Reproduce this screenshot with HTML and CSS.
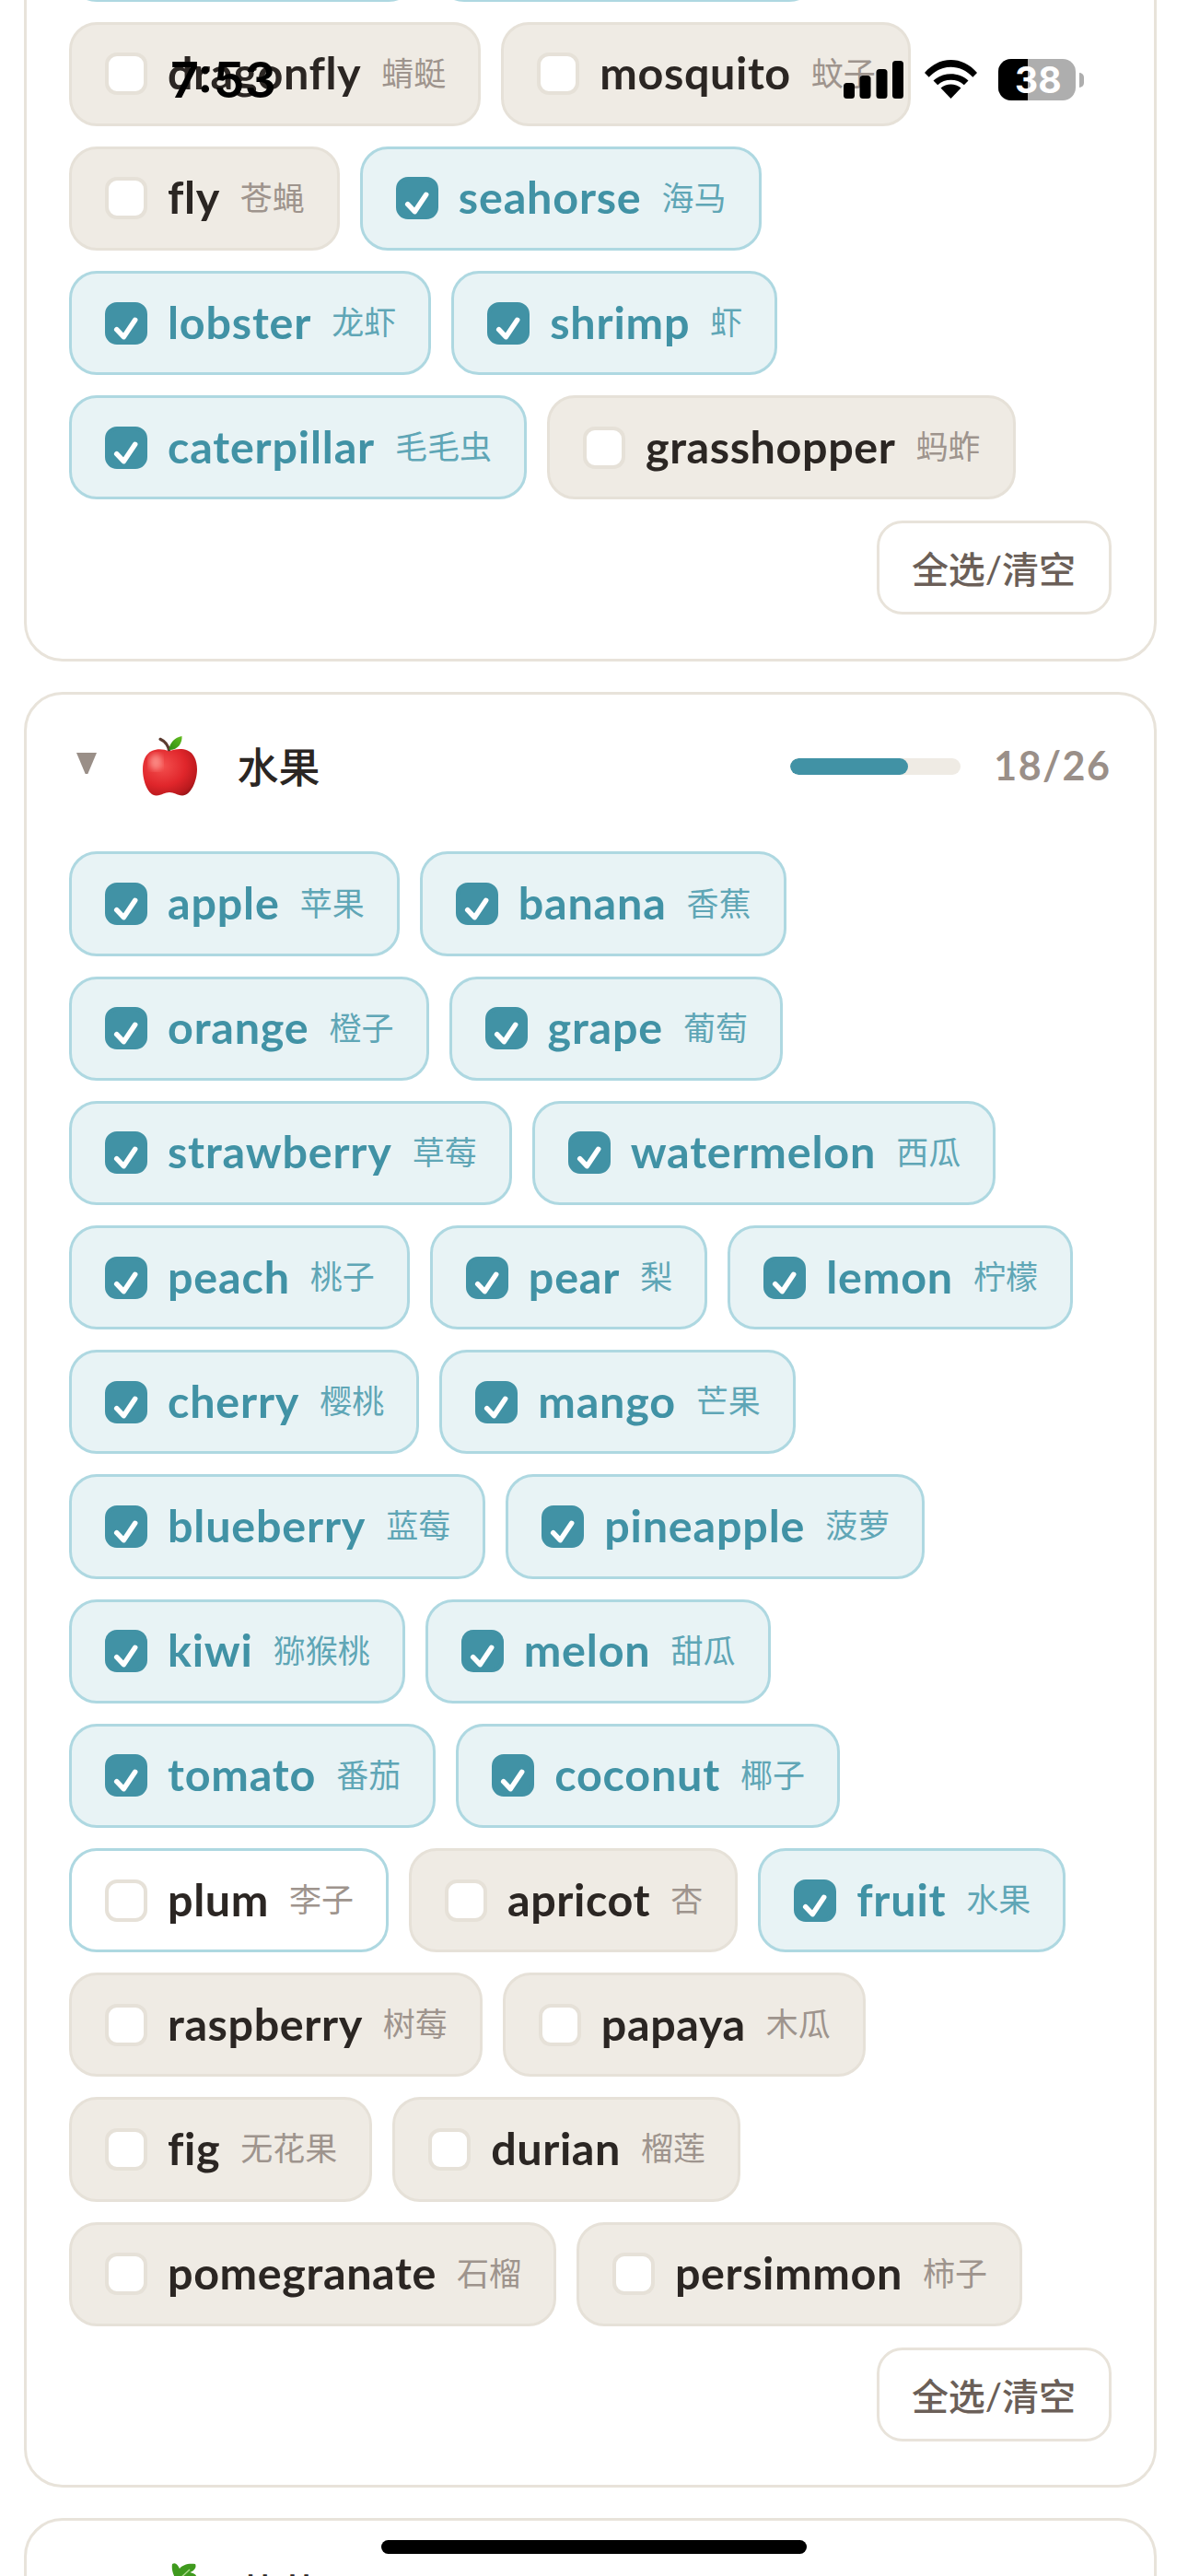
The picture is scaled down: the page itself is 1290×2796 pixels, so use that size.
FILE: index.html
```html
<!DOCTYPE html>
<html lang="zh">
<head>
    <meta charset="UTF-8">
    <title>词汇分类</title>
    <link rel="stylesheet" href="styles.css">
</head>
<body>

    <!-- hidden check glyph, reused by every ticked chip -->
    <svg class="defs" width="0" height="0">
        <symbol id="tick" viewBox="0 0 46 46">
            <path d="M12.7 29.7 20.3 37.7 32.7 19.3" fill="none" stroke="#fff" stroke-width="5.5" stroke-linecap="round" stroke-linejoin="round"/>
        </symbol>
    </svg>

    <main class="page">

        <!-- Insects (scrolled off the top) -->
        <section class="card card-cut">
            <div class="chips">
                <label class="chip on"><span class="box"><svg><use href="#tick"/></svg></span><span class="en">beetle</span><span class="cn">甲虫</span></label>
                <label class="chip on"><span class="box"><svg><use href="#tick"/></svg></span><span class="en">ladybug</span><span class="cn">瓢虫</span></label>
                <label class="chip"><span class="box"></span><span class="en">dragonfly</span><span class="cn">蜻蜓</span></label>
                <label class="chip"><span class="box"></span><span class="en">mosquito</span><span class="cn">蚊子</span></label>
                <label class="chip"><span class="box"></span><span class="en">fly</span><span class="cn">苍蝇</span></label>
                <label class="chip on"><span class="box"><svg><use href="#tick"/></svg></span><span class="en">seahorse</span><span class="cn">海马</span></label>
                <label class="chip on"><span class="box"><svg><use href="#tick"/></svg></span><span class="en">lobster</span><span class="cn">龙虾</span></label>
                <label class="chip on"><span class="box"><svg><use href="#tick"/></svg></span><span class="en">shrimp</span><span class="cn">虾</span></label>
                <label class="chip on"><span class="box"><svg><use href="#tick"/></svg></span><span class="en">caterpillar</span><span class="cn">毛毛虫</span></label>
                <label class="chip"><span class="box"></span><span class="en">grasshopper</span><span class="cn">蚂蚱</span></label>
            </div>
            <div class="actions"><button class="toggle-all">全选/清空</button></div>
        </section>

        <!-- Fruit -->
        <section class="card">
            <header class="card-head">
                <span class="arrow"></span>
                <svg class="emoji" viewBox="0 0 61 66">
                    <defs>
                        <radialGradient id="appleBody" cx="0.36" cy="0.36" r="0.78">
                            <stop offset="0" stop-color="#f4504f"/>
                            <stop offset="0.55" stop-color="#e0262b"/>
                            <stop offset="0.85" stop-color="#bb1a1e"/>
                            <stop offset="1" stop-color="#8f1416"/>
                        </radialGradient>
                        <linearGradient id="appleLeaf" x1="0" y1="1" x2="1" y2="0">
                            <stop offset="0" stop-color="#2f8d14"/>
                            <stop offset="1" stop-color="#63bd20"/>
                        </linearGradient>
                        <filter id="soft"><feGaussianBlur stdDeviation="3"/></filter>
                    </defs>
                    <path d="M30 18C29 12 25 6.500 20 4.300" fill="none" stroke="#5b3b30" stroke-width="3.200" stroke-linecap="round"/>
                    <path d="M29.500 16C30 8 36 2.500 43.500 1C44 8 40 16 29.500 16Z" fill="url(#appleLeaf)"/>
                    <path d="M29.500 17.500C24 15 17 14.500 11 17C4 20 1 28 1 37C1 50 7 66 16 65.500C22 65 25 62 30 62C35 62 38 65 44 65.500C53 65.500 60 50 60 37C60 27 56 19 49.500 16.500C43 14 35 15 29.500 17.500Z" fill="url(#appleBody)"/>
                    <ellipse cx="15" cy="29" rx="7" ry="9" fill="#ff9d96" opacity="0.75" filter="url(#soft)"/>
                </svg>
                <h2 class="card-title">水果</h2>
                <div class="progress"><div class="progress-fill"></div></div>
                <span class="count">18/26</span>
            </header>
            <div class="chips">
                <label class="chip on"><span class="box"><svg><use href="#tick"/></svg></span><span class="en">apple</span><span class="cn">苹果</span></label>
                <label class="chip on"><span class="box"><svg><use href="#tick"/></svg></span><span class="en">banana</span><span class="cn">香蕉</span></label>
                <label class="chip on"><span class="box"><svg><use href="#tick"/></svg></span><span class="en">orange</span><span class="cn">橙子</span></label>
                <label class="chip on"><span class="box"><svg><use href="#tick"/></svg></span><span class="en">grape</span><span class="cn">葡萄</span></label>
                <label class="chip on"><span class="box"><svg><use href="#tick"/></svg></span><span class="en">strawberry</span><span class="cn">草莓</span></label>
                <label class="chip on"><span class="box"><svg><use href="#tick"/></svg></span><span class="en">watermelon</span><span class="cn">西瓜</span></label>
                <label class="chip on"><span class="box"><svg><use href="#tick"/></svg></span><span class="en">peach</span><span class="cn">桃子</span></label>
                <label class="chip on"><span class="box"><svg><use href="#tick"/></svg></span><span class="en">pear</span><span class="cn">梨</span></label>
                <label class="chip on"><span class="box"><svg><use href="#tick"/></svg></span><span class="en">lemon</span><span class="cn">柠檬</span></label>
                <label class="chip on"><span class="box"><svg><use href="#tick"/></svg></span><span class="en">cherry</span><span class="cn">樱桃</span></label>
                <label class="chip on"><span class="box"><svg><use href="#tick"/></svg></span><span class="en">mango</span><span class="cn">芒果</span></label>
                <label class="chip on"><span class="box"><svg><use href="#tick"/></svg></span><span class="en">blueberry</span><span class="cn">蓝莓</span></label>
                <label class="chip on"><span class="box"><svg><use href="#tick"/></svg></span><span class="en">pineapple</span><span class="cn">菠萝</span></label>
                <label class="chip on"><span class="box"><svg><use href="#tick"/></svg></span><span class="en">kiwi</span><span class="cn">猕猴桃</span></label>
                <label class="chip on"><span class="box"><svg><use href="#tick"/></svg></span><span class="en">melon</span><span class="cn">甜瓜</span></label>
                <label class="chip on"><span class="box"><svg><use href="#tick"/></svg></span><span class="en">tomato</span><span class="cn">番茄</span></label>
                <label class="chip on"><span class="box"><svg><use href="#tick"/></svg></span><span class="en">coconut</span><span class="cn">椰子</span></label>
                <label class="chip hover"><span class="box"></span><span class="en">plum</span><span class="cn">李子</span></label>
                <label class="chip"><span class="box"></span><span class="en">apricot</span><span class="cn">杏</span></label>
                <label class="chip on"><span class="box"><svg><use href="#tick"/></svg></span><span class="en">fruit</span><span class="cn">水果</span></label>
                <label class="chip"><span class="box"></span><span class="en">raspberry</span><span class="cn">树莓</span></label>
                <label class="chip"><span class="box"></span><span class="en">papaya</span><span class="cn">木瓜</span></label>
                <label class="chip"><span class="box"></span><span class="en">fig</span><span class="cn">无花果</span></label>
                <label class="chip"><span class="box"></span><span class="en">durian</span><span class="cn">榴莲</span></label>
                <label class="chip"><span class="box"></span><span class="en">pomegranate</span><span class="cn">石榴</span></label>
                <label class="chip"><span class="box"></span><span class="en">persimmon</span><span class="cn">柿子</span></label>
            </div>
            <div class="actions"><button class="toggle-all">全选/清空</button></div>
        </section>

        <!-- Vegetables (cut by the bottom of the screen) -->
        <section class="card">
            <header class="card-head">
                <span class="arrow"></span>
                <svg class="emoji" viewBox="0 0 61 66">
                    <path d="M33 2C37 0 39 3 41 7C44 3 50 1 58 2C60 6 56 10 52 11C56 12 60 13 59 17C52 22 44 22 38 20C34 14 32 8 33 2Z" fill="#3f9a1e"/>
                    <path d="M40 19 52 8" stroke="#a8d98a" stroke-width="1.500" fill="none"/>
                    <path d="M12 60 38 20 50 30Z" fill="#f08a1d"/>
                </svg>
                <h2 class="card-title">蔬菜</h2>
                <div class="progress"></div>
                <span class="count">0/24</span>
            </header>
        </section>
    </main>

    <!-- Phone status bar, sits over the page -->
    <div class="status-bar">
        <span class="time">7:53</span>
        <svg class="signal" viewBox="0 0 65 41">
            <rect x="0" y="24" width="12" height="17" rx="3.500"/>
            <rect x="17.500" y="16" width="12" height="25" rx="3.500"/>
            <rect x="35.500" y="9" width="12" height="32" rx="3.500"/>
            <rect x="53" y="0" width="12" height="41" rx="3.500"/>
        </svg>
        <svg class="wifi" viewBox="0 0 57 42">
            <path d="M28.500 42 17.500 30.500C24 25 33 25 39.500 30.500Z"/>
            <path d="M9.500 22.500C20 12.800 37 12.800 47.500 22.500L42.800 27.300C35 20 22 20 14.200 27.300Z"/>
            <path d="M0 14C16 -4.600 41 -4.600 57 14L52.300 18.800C39 4 18 4 4.700 18.800Z"/>
        </svg>
        <div class="battery"><div class="battery-level">38</div></div>
        <span class="battery-cap"></span>
    </div>
    <div class="home-bar"></div>

</body>
</html>
```

FILE: styles.css
```css
* {
    box-sizing: border-box;
}

body {
    margin: 0;
    height: 2796px;
    overflow: hidden;
    background-color: #fff;
    font-family: Lato, "Noto Sans CJK SC", sans-serif;
    color: #2b2623;
    position: relative;
}

.defs {
    position: absolute;
}

.page {
    display: flex;
    flex-direction: column;
    gap: 33px;
    width: 1230px;
    margin-left: 26px;
}

.card {
    background: #fff;
    border: 3.5px solid #e8e3da;
    border-radius: 42px;
    padding: 46.5px 46.5px 47.5px 46px;
}

.card-cut {
    margin-top: -161px;
}

/* Card header */
.card-head {
    display: flex;
    align-items: center;
    height: 64px;
    margin-bottom: 60px;
}

.arrow {
    width: 22px;
    height: 23px;
    margin: -8px 0 0 8px;
    background: #9a8f88;
    clip-path: polygon(0 0, 100% 0, 56% 100%, 44% 100%);
}

.emoji {
    width: 61px;
    height: 66px;
    margin: -2px 0 0 48.5px;
    overflow: visible;
}

.card-title {
    margin: -3px auto 0 43px;
    font-size: 45px;
    font-weight: 500;
    color: #2b2623;
}

.progress {
    width: 185px;
    height: 18px;
    border-radius: 9px;
    background: #efebe4;
    overflow: hidden;
}

.progress-fill {
    width: 128px;
    height: 100%;
    border-radius: 9px;
    background: #4192a5;
}

.count {
    margin: -3px 0 0 36px;
    font-size: 43px;
    font-weight: 700;
    color: #9a8f88;
    letter-spacing: 1.5px;
}

/* Word chips */
.chips {
    display: flex;
    flex-wrap: wrap;
    gap: 22px;
}

.chip {
    display: inline-flex;
    align-items: center;
    height: 113.2px;
    padding: 0 35px 0 36px;
    background: #efebe4;
    border: 3.5px solid #e6e1d8;
    border-radius: 30px;
}

.chip.on {
    background: #e8f3f5;
    border-color: #aed8e1;
}

.chip.hover {
    background: #fff;
    border-color: #aed8e1;
}

.box {
    flex: none;
    width: 46px;
    height: 46px;
    background: #fff;
    border: 4px solid #e6e1d8;
    border-radius: 13px;
}

.box svg {
    display: block;
    width: 46px;
    height: 46px;
    margin: -4px;
}

.chip.on .box {
    background: #4192a5;
    border-color: #4192a5;
}

.en {
    margin: -4px 0 0 22px;
    font-size: 48.5px;
    font-weight: 700;
    letter-spacing: 0.6px;
    color: #2b2623;
}

.chip.on .en {
    letter-spacing: 0.8px;
    color: #4192a5;
}

.cn {
    margin: -6px 0 0 22px;
    font-size: 35px;
    color: #9e948d;
}

.chip.on .cn {
    color: #5fa6b6;
}

/* Select all */
.actions {
    display: flex;
    justify-content: flex-end;
    margin-top: 23px;
}

.toggle-all {
    width: 255px;
    height: 102px;
    padding: 0;
    background: #fff;
    border: 3.5px solid #e8e3da;
    border-radius: 28px;
    font-family: Lato, "Noto Sans CJK SC", sans-serif;
    font-size: 40px;
    font-weight: 500;
    color: #6b5f58;
}

/* Phone overlays */
.status-bar {
    position: absolute;
    top: 0;
    left: 0;
    width: 100%;
    height: 120px;
    display: flex;
    align-items: flex-start;
    color: #000;
    fill: #000;
}

.time {
    margin: 54px 0 0 185px;
    font-family: Inter, sans-serif;
    font-size: 54px;
    font-weight: 600;
    line-height: 66px;
    width: 731px;
}

.signal {
    width: 65px;
    height: 41px;
    margin-top: 66px;
}

.wifi {
    width: 57px;
    height: 42px;
    margin: 65px 0 0 23px;
}

.battery {
    width: 84px;
    height: 45px;
    margin: 64px 0 0 23px;
    border-radius: 14px;
    overflow: hidden;
    background: #aeaeae;
}

.battery-level {
    width: 32px;
    height: 45px;
    padding-left: 18px;
    background: #000;
    color: #fff;
    font-family: Inter, sans-serif;
    font-size: 39px;
    font-weight: 700;
    line-height: 45px;
    white-space: nowrap;
}

.battery-cap {
    width: 5px;
    height: 16px;
    margin: 79px 0 0 4px;
    border-radius: 0 5px 5px 0;
    background: #aeaeae;
}

.home-bar {
    position: absolute;
    left: 414px;
    top: 2757px;
    width: 462px;
    height: 15px;
    border-radius: 8px;
    background: #000;
}
```
